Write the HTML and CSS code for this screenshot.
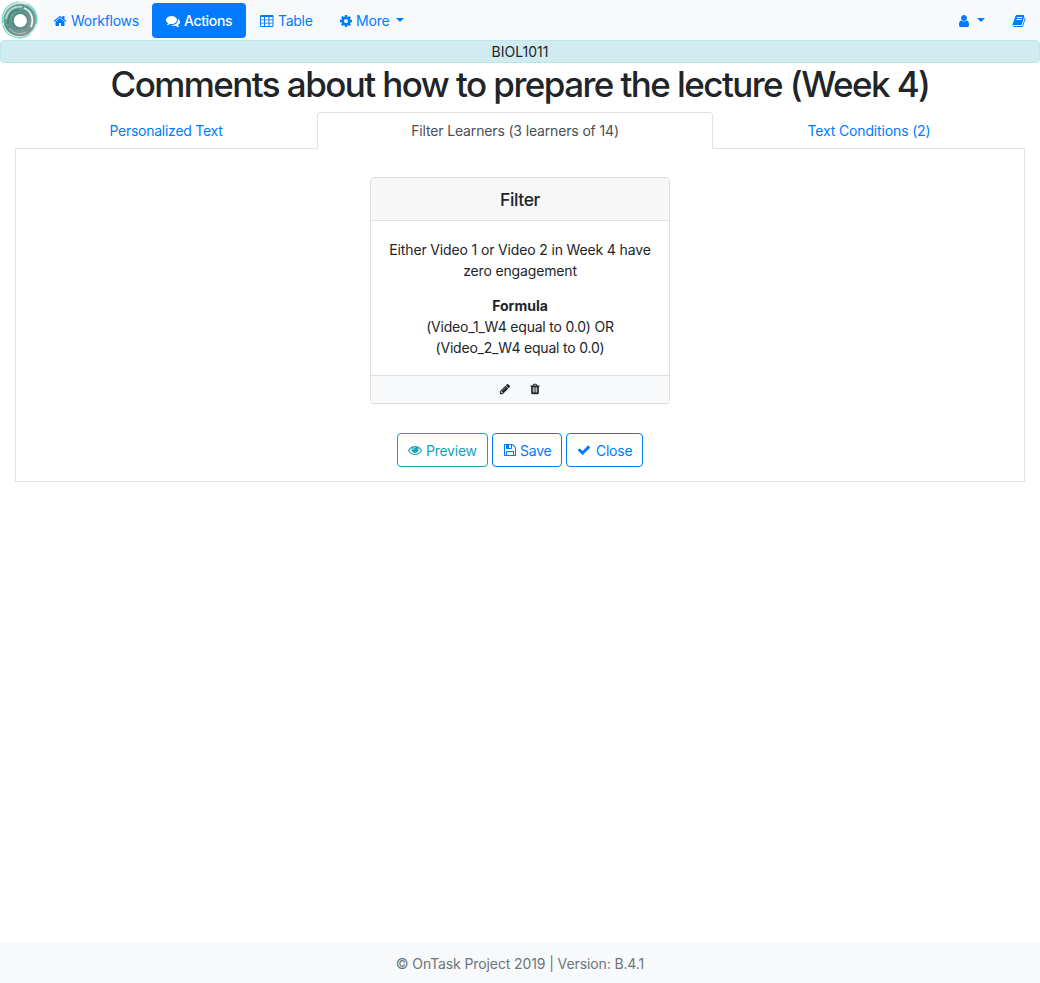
FILE: index.html
```html
<!DOCTYPE html>
<html lang="en">
<head>
<meta charset="utf-8">
<title>OnTask</title>
<link rel="stylesheet" href="styles.css">
</head>
<body>
<nav class="navbar">
  <a class="brand" href="#">
    <svg width="40" height="40" viewBox="0 0 40 40">
      <defs>
        <linearGradient id="ring" x1="0" y1="0" x2="1" y2="1">
          <stop offset="0" stop-color="#84b5ab"/><stop offset=".45" stop-color="#5f938b"/><stop offset="1" stop-color="#98979d"/>
        </linearGradient>
      </defs>
      <rect width="40" height="40" fill="#fff"/>
      <circle cx="19.7" cy="19.700" r="18.600" fill="#d5f3ec"/>
      <circle cx="19.700" cy="20" r="16.300" fill="url(#ring)"/>
      <path d="M2.500 23C1 12 8 3 18 2M3 25c1 6 5 10 11 12 6 2 12 0 16-3" fill="none" stroke="#7fdcc8" stroke-width="1.200"/>
      <path d="M6 19C8 9 15 6 22 7" fill="none" stroke="#c3dcd7" stroke-width="1.600"/>
      <path d="M8 24C8 15 12 10 19 10" fill="none" stroke="#3f8d80" stroke-width="2"/>
      <path d="M24 8c8 3 10 12 7 19" fill="none" stroke="#f0faf7" stroke-width="1.800"/>
      <path d="M27 4c8 4 11 12 9 20" fill="none" stroke="#5fd0b9" stroke-width="1.200"/>
      <path d="M9 28c4 5 10 7 17 4" fill="none" stroke="#b8b6ba" stroke-width="1.200"/>
      <circle cx="20" cy="20.600" r="8.300" fill="#568a83"/>
      <circle cx="20.300" cy="20.700" r="6.600" fill="#fff"/>
    </svg>
  </a>
  <a class="nav-link workflows" href="#"><svg class="icon" viewBox="0 0 1792 1792"><path d="M1472 992v480q0 26-19 45t-45 19h-384v-384h-256v384h-384q-26 0-45-19t-19-45v-480q0-1 .5-3t.5-3l575-474 575 474q1 2 1 6zm223-69l-62 74q-8 9-21 11h-3q-13 0-21-7l-692-577-692 577q-12 8-24 7-13-2-21-11l-62-74q-8-10-7-23.5t11-21.5l719-599q32-26 76-26t76 26l244 204v-195q0-14 9-23t23-9h192q14 0 23 9t9 23v408l219 182q10 8 11 21.5t-7 23.5z"/></svg><span>Workflows</span></a>
  <a class="nav-link actions" href="#"><svg class="icon" viewBox="0 0 1792 1792"><path d="M1408 768q0 139-94 257t-256.5 186.5-353.5 68.5q-86 0-176-16-124 88-278 128-36 9-86 16h-3q-11 0-20.5-8t-11.5-21q-1-3-1-6.5t.5-6.5 2-6l2.5-5 3.5-5.5 4-5 4.5-5 4-4.5q5-6 23-25t26-29.5 22.5-29 25-38.5 20.5-44q-124-72-195-177t-71-224q0-139 94-257t256.5-186.5 353.5-68.5 353.5 68.5 256.5 186.5 94 257zm384 256q0 120-71 224.5t-195 176.5q10 24 20.5 44t25 38.5 22.5 29 26 29.5 23 25q1 1 4 4.5t4.5 5 4 5 3.5 5.5l2.5 5 2 6 .5 6.5-1 6.5q-3 14-13 22t-22 7q-50-7-86-16-154-40-278-128-90 16-176 16-271 0-472-132 58 4 88 4 161 0 309-45t264-129q125-92 192-212t67-254q0-77-23-152 129 71 204 178t75 230z"/></svg><span>Actions</span></a>
  <a class="nav-link table" href="#"><svg class="icon" viewBox="0 0 14 14"><path fill-rule="evenodd" d="M1.200 1h11.100q1.200 0 1.200 1.200v9.600q0 1.200-1.200 1.200H1.200Q0 13 0 11.800V2.200Q0 1 1.200 1zM1 3v2.400h3V3zM5 3v2.400h3.500V3zM9.500 3v2.400h3V3zM1 6.300v2.400h3V6.300zM5 6.300v2.400h3.500V6.300zM9.500 6.300v2.400h3V6.300zM1 9.600v2.400h3V9.600zM5 9.600v2.400h3.500V9.600zM9.500 9.600v2.400h3V9.600z"/></svg><span>Table</span></a>
  <a class="nav-link more" href="#"><svg class="icon" viewBox="0 0 1792 1792"><path d="M1152 896q0-106-75-181t-181-75-181 75-75 181 75 181 181 75 181-75 75-181zm512-109v222q0 12-8 23t-20 13l-185 28q-19 54-39 91 35 50 107 138 10 12 10 25t-9 23q-27 37-99 108t-94 71q-12 0-26-9l-138-108q-44 23-91 38-16 136-29 186-7 28-36 28h-222q-14 0-24.5-8.5t-11.5-21.5l-28-184q-49-16-90-37l-141 107q-10 9-25 9-14 0-25-11-126-114-165-168-7-10-7-23 0-12 8-23 15-21 51-66.500t54-70.500q-27-50-41-99l-183-27q-13-2-21-12.500t-8-23.500v-222q0-12 8-23t19-13l186-28q14-46 39-92-40-57-107-138-10-12-10-24 0-10 9-23 26-36 98.500-107.500t94.500-71.500q13 0 26 10l138 107q44-23 91-38 16-136 29-186 7-28 36-28h222q14 0 24.500 8.500t11.500 21.500l28 184q49 16 90 37l142-107q9-9 24-9 13 0 25 10 129 119 165 170 7 8 7 22 0 12-8 23-15 21-51 66.500t-54 70.500q26 50 41 98l183 28q13 2 21 12.500t8 23.500z"/></svg><span>More</span><i class="caret"></i></a>
  <a class="nav-link user" href="#"><svg class="icon" viewBox="0 0 1792 1792"><path d="M1536 1399q0 109-62.500 187t-150.500 78h-854q-88 0-150.500-78t-62.500-187q0-85 8.500-160.500t31.500-152 58.500-131 94-89 134.500-34.500q131 128 313 128t313-128q76 0 134.500 34.500t94 89 58.500 131 31.500 152 8.500 160.500zm-256-887q0 159-112.500 271.500t-271.500 112.500-271.500-112.500-112.500-271.500 112.500-271.500 271.500-112.500 271.500 112.500 112.500 271.500z"/></svg><i class="caret"></i></a>
  <a class="nav-link docs" href="#"><svg class="icon" viewBox="0 0 1792 1792"><path d="M1703 478q40 57 18 129l-275 906q-19 64-76.500 107.500t-122.500 43.500h-923q-77 0-148.500-53.500t-99.500-131.500q-24-67-2-127 0-4 3-27t4-37q1-8-3-21.500t-3-19.500q2-11 8-21t16.500-23.500 16.500-23.500q23-38 45-91.500t30-91.500q3-10 .5-30t-.5-28q3-11 17-28t17-23q21-36 42-92t25-90q1-9-2.500-32t.5-28q4-13 22-30.500t22-22.500q19-26 42.500-84.500t27.500-96.500q1-8-3-25.500t-2-26.500q2-8 9-18t18-23 17-21q8-12 16.500-30.500t15-35 16-36 19.500-32 26.500-23.500 36-11.500 47.500 5.500l-1 3q38-9 51-9h761q74 0 114 56t18 130l-274 906q-36 119-71.500 153.500t-128.500 34.500h-869q-27 0-38 15-11 16-1 43 24 70 144 70h923q29 0 56-15.500t35-41.500l300-987q7-22 5-57 38 15 59 43zm-1064 2q-4 13 2 22.500t20 9.500h608q13 0 25.500-9.500t16.500-22.500l21-64q4-13-2-22.500t-20-9.500h-608q-13 0-25.500 9.500t-16.500 22.500zm-83 256q-4 13 2 22.500t20 9.500h608q13 0 25.500-9.500t16.500-22.500l21-64q4-13-2-22.500t-20-9.500h-608q-13 0-25.500 9.500t-16.500 22.500z"/></svg></a>
</nav>
<div class="workflow-name"><span>BIOL1011</span></div>
<main class="content">
  <h1 class="title"><span>Comments about how to prepare the lecture (Week 4)</span></h1>
  <div class="tabs">
    <a class="tab tab-text" href="#"><span>Personalized Text</span></a>
    <a class="tab tab-filter" href="#"><span>Filter Learners (3 learners of 14)</span></a>
    <a class="tab tab-conditions" href="#"><span>Text Conditions (2)</span></a>
  </div>
  <section class="panel">
    <article class="card">
      <h2 class="card-header"><span>Filter</span></h2>
      <div class="card-body">
        <p class="description">Either Video 1 or Video 2 in Week 4 have<br>zero engagement</p>
        <p class="formula"><strong>Formula</strong><br>(Video_1_W4 equal to 0.0) OR<br>(Video_2_W4 equal to 0.0)</p>
      </div>
      <div class="card-footer">
        <svg class="icon small" viewBox="0 0 1792 1792"><path d="M491 1536l91-91-235-235-91 91v107h128v128h107zm523-928q0-22-22-22-10 0-17 7l-542 542q-7 7-7 17 0 22 22 22 10 0 17-7l542-542q7-7 7-17zm-54-192l416 416-832 832h-416v-416zm683 96q0 53-37 90l-166 166-416-416 166-165q36-38 90-38 53 0 91 38l235 234q37 39 37 91z"/></svg>
        <svg class="icon small" viewBox="0 0 1792 1792"><path d="M704 1376v-704q0-14-9-23t-23-9h-64q-14 0-23 9t-9 23v704q0 14 9 23t23 9h64q14 0 23-9t9-23zm256 0v-704q0-14-9-23t-23-9h-64q-14 0-23 9t-9 23v704q0 14 9 23t23 9h64q14 0 23-9t9-23zm256 0v-704q0-14-9-23t-23-9h-64q-14 0-23 9t-9 23v704q0 14 9 23t23 9h64q14 0 23-9t9-23zm-544-992h448l-48-117q-7-9-17-11h-317q-10 2-17 11zm928 32v64q0 14-9 23t-23 9h-96v948q0 83-47 143.500t-113 60.500h-832q-66 0-113-58.500t-47-141.500v-952h-96q-14 0-23-9t-9-23v-64q0-14 9-23t23-9h309l70-167q15-37 54-63t79-26h320q40 0 79 26t54 63l70 167h309q14 0 23 9t9 23z"/></svg>
      </div>
    </article>
    <div class="buttons">
      <button class="btn preview"><svg class="icon" viewBox="0 0 1792 1792"><path d="M1664 960q-152-236-381-353 61 104 61 225 0 185-131.500 316.500t-316.500 131.500-316.500-131.500-131.500-316.500q0-121 61-225-229 117-381 353 133 205 333.500 326.500t434.500 121.500 434.500-121.500 333.500-326.500zm-720-384q0-20-14-34t-34-14q-125 0-214.500 89.500t-89.500 214.500q0 20 14 34t34 14 34-14 14-34q0-86 61-147t147-61q20 0 34-14t14-34zm848 384q0 34-20 69-140 230-376.500 368.500t-499.500 138.500-499.500-139-376.500-368q-20-35-20-69t20-69q140-229 376.500-368t499.500-139 499.500 139 376.500 368q20 35 20 69z"/></svg><span>Preview</span></button>
      <button class="btn save"><svg class="icon" viewBox="0 0 1792 1792"><path d="M512 1536h768v-384h-768v384zm896 0h128v-896q0-14-10-38.500t-20-34.500l-281-281q-10-10-34-20t-39-10v416q0 40-28 68t-68 28h-576q-40 0-68-28t-28-68v-416h-128v1280h128v-416q0-40 28-68t68-28h832q40 0 68 28t28 68v416zm-384-928v-320q0-13-9.500-22.500t-22.500-9.500h-192q-13 0-22.500 9.500t-9.500 22.500v320q0 13 9.500 22.500t22.500 9.500h192q13 0 22.500-9.500t9.500-22.500zm640 32v928q0 40-28 68t-68 28h-1344q-40 0-68-28t-28-68v-1344q0-40 28-68t68-28h928q40 0 88 20t76 48l280 280q28 28 48 76t20 88z"/></svg><span>Save</span></button>
      <button class="btn close"><svg class="icon" viewBox="0 0 1792 1792"><path d="M1671 566q0 40-28 68l-724 724-136 136q-28 28-68 28t-68-28l-136-136-362-362q-28-28-28-68t28-68l136-136q28-28 68-28t68 28l294 295 656-657q28-28 68-28t68 28l136 136q28 28 28 68z"/></svg><span>Close</span></button>
    </div>
  </section>
</main>
<footer class="footer"><span>© OnTask Project 2019 | Version: B.4.1</span></footer>
</body>
</html>
```
FILE: styles.css
```css
* { box-sizing: border-box; }
body {
  margin: 0;
  min-height: 983px;
  display: flex;
  flex-direction: column;
  background: #fff;
  color: #212529;
  font: 14px/21px Inter, "Liberation Sans", sans-serif;
  letter-spacing: -0.15px;
}
a { color: #007bff; text-decoration: none; }
.navbar { display: flex; align-items: center; height: 40px; background: #f8f9fa; }
.brand, .brand svg { display: block; width: 40px; height: 40px; }
.nav-link {
  display: flex;
  align-items: center;
  height: 35px;
  padding: 0 14px;
  margin-top: 1px;
  border-radius: 4px;
}
.icon { display: block; flex: none; width: 14px; height: 14px; margin-right: 4px; fill: currentColor; }
.workflows { width: 112px; padding-left: 13px; letter-spacing: -0.25px; }
.workflows .icon { margin-right: 4px; }
.actions { width: 94px; background: #007bff; color: #fff; font-weight: 500; letter-spacing: -0.35px; }
.table { width: 80px; letter-spacing: -0.3px; }
.more { width: 92px; padding-left: 13px; letter-spacing: -0.2px; }
.more .icon { margin-right: 3px; }
.caret { border: 4px solid transparent; border-top-color: currentColor; border-bottom: 0; margin-left: 7px; margin-top: -2px; }
.user { margin-left: auto; padding: 0 14px; }
.user .icon { margin: 0; }
.user .caret { margin-left: 6px; }
.docs { padding: 0 14px 0 13px; }
.docs .icon { margin: 0; }
.workflow-name {
  height: 23px;
  border: 1px solid #bee5eb;
  border-radius: 4px;
  background: #d1ecf1;
  color: #212529;
  text-align: center;
  line-height: 22px;
  letter-spacing: 0;
}
.content { padding: 0 15px; }
.title {
  height: 42px;
  margin: 0 0 7px;
  font-size: 35px;
  font-weight: 500;
  line-height: 43px;
  letter-spacing: -1.57px;
  text-align: center;
  white-space: nowrap;
}
.tabs { display: flex; height: 37px; }
.tab {
  display: flex;
  justify-content: center;
  align-items: center;
  border-bottom: 1px solid #dee2e6;
}
.tab-text { width: 302px; }
.tab-text span { letter-spacing: -0.25px; }
.tab-filter {
  width: 396px;
  border: 1px solid #dee2e6;
  border-bottom-color: #fff;
  border-radius: 4px 4px 0 0;
  color: #495057;
}
.tab-conditions { flex: 1; }
.panel { height: 333px; padding-top: 28px; border: 1px solid #dee2e6; border-top: 0; }
.card {
  width: 300px;
  margin: 0 auto;
  border: 1px solid #dfdfdf;
  border-radius: 4px;
  text-align: center;
  overflow: hidden;
}
.card-header {
  height: 43px;
  margin: 0;
  background: #f7f7f7;
  border-bottom: 1px solid #dfdfdf;
  font-size: 17.5px;
  font-weight: 500;
  line-height: 43px;
  letter-spacing: -0.4px;
}
.card-body { height: 154px; padding-top: 18px; white-space: nowrap; }
.description { margin: 0 0 14px; }
.formula { margin: 0; letter-spacing: -0.2px; }
.formula strong { letter-spacing: 0; }
.card-footer {
  display: flex;
  justify-content: center;
  align-items: center;
  gap: 18px;
  height: 28px;
  border-top: 1px solid #dfdfdf;
  background: #f8f9fa;
}
.icon.small { width: 12px; height: 12px; margin: 0 0 1px; }
.buttons { display: flex; justify-content: center; gap: 4px; margin-top: 29px; }
.btn {
  display: flex;
  align-items: center;
  height: 34px;
  padding: 0 10px;
  border: 1px solid currentColor;
  border-radius: 4px;
  background: #fff;
  color: #007bff;
  font: inherit;
  letter-spacing: -0.25px;
  white-space: nowrap;
}
.preview { width: 91px; color: #17a2b8; }
.save { width: 70px; }
.close { width: 77px; }
.save .icon { margin-right: 3px; }
.close .icon { margin-right: 5px; }
.footer {
  margin-top: auto;
  height: 40px;
  background: #f8f9fa;
  color: #6c757d;
  text-align: center;
  line-height: 42px;
  letter-spacing: -0.11px;
}
```
